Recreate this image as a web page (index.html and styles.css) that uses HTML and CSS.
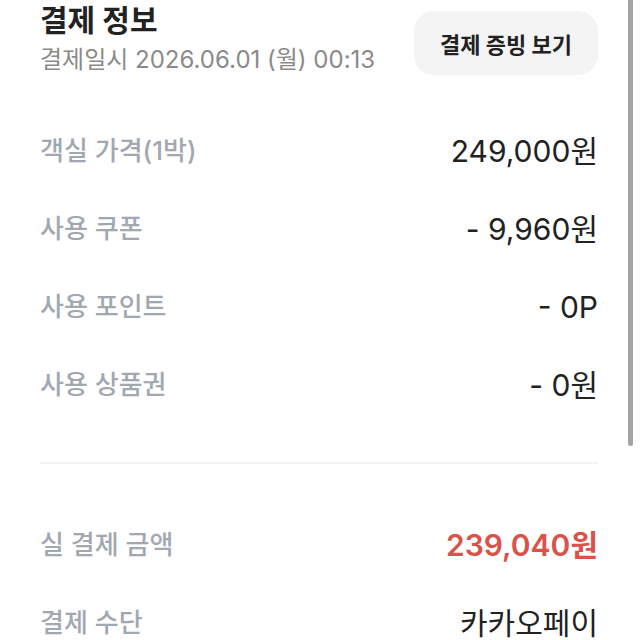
FILE: index.html
```html
<!DOCTYPE html>
<html lang="ko">
<head>
<meta charset="utf-8">
<link rel="stylesheet" href="styles.css">
</head>
<body>
<div class="page">
  <header class="head">
    <div class="head-text">
      <h1 class="title">결제 정보</h1>
      <p class="date">결제일시 2026.06.01 (월) 00:13</p>
    </div>
    <button class="proof-btn">결제 증빙 보기</button>
  </header>

  <section class="rows">
    <div class="row"><span class="label">객실 가격(1박)</span><span class="value">249,000원</span></div>
    <div class="row"><span class="label">사용 쿠폰</span><span class="value">- 9,960원</span></div>
    <div class="row"><span class="label">사용 포인트</span><span class="value">- 0P</span></div>
    <div class="row"><span class="label">사용 상품권</span><span class="value">- 0원</span></div>
  </section>

  <hr class="divider">

  <section class="rows rows-total">
    <div class="row"><span class="label">실 결제 금액</span><span class="value total">239,040원</span></div>
    <div class="row"><span class="label">결제 수단</span><span class="value">카카오페이</span></div>
  </section>
</div>
<div class="scroll-thumb"></div>
</body>
</html>
```

FILE: styles.css
```css
* { box-sizing: border-box; }
html, body { margin: 0; padding: 0; background: #fff; }
body {
  font-family: Inter, "Noto Sans CJK KR", sans-serif;
  color: #222;
  overflow: hidden;
  height: 640px;
}
.page {
  padding: 0 42px 0 40px;
}
.head {
  display: flex;
  justify-content: space-between;
  align-items: flex-start;
  padding-top: 1px;
}
.title {
  margin: 0;
  font-size: 30px;
  font-weight: 700;
  line-height: 38px;
  color: #222;
}
.date {
  margin: 6px 0 0;
  font-size: 24px;
  line-height: 30px;
  color: #8a8a8a;
}
.proof-btn {
  margin-top: 10px;
  width: 184px;
  height: 64px;
  border: none;
  border-radius: 20px;
  background: #f4f4f4;
  font-family: Inter, "Noto Sans CJK KR", sans-serif;
  font-size: 22px;
  font-weight: 700;
  color: #222;
  padding: 0;
}
.rows {
  display: flex;
  flex-direction: column;
  margin-top: 37px;
}
.row {
  display: flex;
  justify-content: space-between;
  align-items: center;
  height: 78px;
}
.label {
  font-size: 26px;
  line-height: 32px;
  font-weight: 500;
  color: #a1a8b1;
}
.value {
  font-size: 30px;
  line-height: 34px;
  font-weight: 400;
  color: #222;
}
.value.total {
  color: #d9534a;
  font-weight: 600;
}
.divider {
  border: none;
  height: 2px;
  background: #f2f2f2;
  margin: 38px 0 0;
}
.rows-total { margin-top: 42px; }
.scroll-thumb {
  position: absolute;
  top: 0;
  left: 628px;
  width: 5px;
  height: 446px;
  background: #a3a3a3;
  border-radius: 0 0 3px 3px;
}
```
